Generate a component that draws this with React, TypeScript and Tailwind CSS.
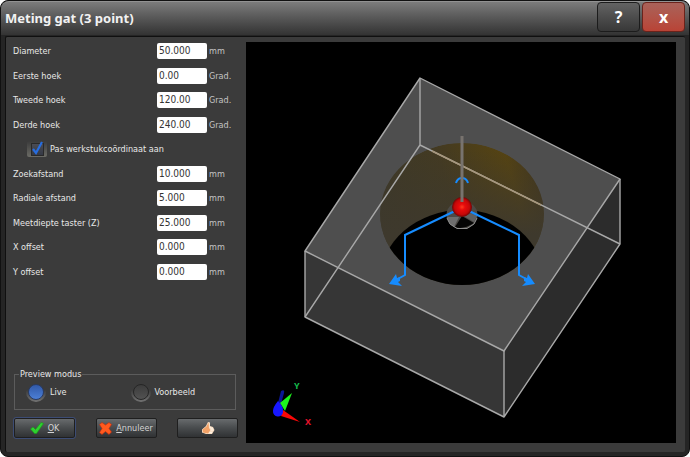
import { useState } from "react";

interface Field {
  id: string;
  label: string;
  value: string;
  unit: string;
}

const hoekFields: Field[] = [
  { id: "diameter", label: "Diameter", value: "50.000", unit: "mm" },
  { id: "hoek1", label: "Eerste hoek", value: "0.00", unit: "Grad." },
  { id: "hoek2", label: "Tweede hoek", value: "120.00", unit: "Grad." },
  { id: "hoek3", label: "Derde hoek", value: "240.00", unit: "Grad." },
];

const afstandFields: Field[] = [
  { id: "zoek", label: "Zoekafstand", value: "10.000", unit: "mm" },
  { id: "radiaal", label: "Radiale afstand", value: "5.000", unit: "mm" },
  { id: "diepte", label: "Meetdiepte taster (Z)", value: "25.000", unit: "mm" },
  { id: "xoffset", label: "X offset", value: "0.000", unit: "mm" },
  { id: "yoffset", label: "Y offset", value: "0.000", unit: "mm" },
];

function FieldRow({ field }: { field: Field }) {
  return (
    <div className="flex items-center">
      <label htmlFor={field.id} className="w-36 shrink-0">
        {field.label}
      </label>
      <input
        id={field.id}
        defaultValue={field.value}
        className="h-4 w-[50px] rounded-xs bg-white pl-0.5 text-[10px] leading-4 text-[#333333] outline-none"
      />
      <span className="pl-0.5 text-[#c4c4c4]">{field.unit}</span>
    </div>
  );
}

function ModeRadio({ label, checked, onChange }: { label: string; checked: boolean; onChange: () => void }) {
  return (
    <label className="flex flex-1 items-center gap-1">
      <span className="flex size-5 items-center justify-center rounded-full bg-linear-to-b from-[#3b3b3b] from-40% to-[#747474]">
        <input
          type="radio"
          name="modus"
          checked={checked}
          onChange={onChange}
          className="size-4 appearance-none rounded-full border border-[#262626] bg-linear-to-b from-[#3c3c3c] to-[#525252] checked:border-[#283a63] checked:from-[#3159a8] checked:to-[#4c7fd6]"
        />
      </span>
      {label}
    </label>
  );
}

const buttonClass =
  "flex h-5 w-[61px] items-center justify-center gap-1 rounded-xs border border-[#1f1f1f] bg-linear-to-b from-[#686b6d] via-[#4b4e50] via-45% to-[#303234] text-[#d4d4d4]";

function CheckIcon() {
  return (
    <svg viewBox="0 0 14 12" className="h-3 w-3.5" aria-hidden="true">
      <path d="M.5 7 3 5 5.5 7.500 11 .5 13.5 1.5 6.500 11.5H4.5Z" fill="#2fd02f" stroke="#18a018" strokeWidth=".6" />
    </svg>
  );
}

function CrossIcon() {
  return (
    <svg viewBox="0 0 13 13" className="size-[13px]" aria-hidden="true">
      <path d="M.5 2.500 3 .5l3.500 2.500L10 .5l2.500 2-2.500 4L12.500 10 10 12.5 6.5 9.500 3 12.5.5 10.5 3 6.5Z" fill="#ff5a1e" stroke="#c22a0d" strokeWidth=".6" />
    </svg>
  );
}

function HandIcon() {
  return (
    <svg viewBox="0 0 14 14" className="size-3.5" aria-hidden="true">
      <path d="M1 8.5 5 5 7 1 9 1.5 9 5 12 6 13.500 9 11 13 5 13 1 11.5Z" fill="#f9dfc6" />
      <path d="M1.500 8.500 5.500 5.500 7.500 1.500 8 7 9.500 9 7 12.500 2 11.5Z" fill="#f2a268" />
      <path d="M9 6.5 12 8M9.5 9H12M8.5 11.5H11" stroke="#fff4e5" strokeWidth="1" />
    </svg>
  );
}

function Preview() {
  return (
    <svg viewBox="246 42 430 401" className="h-full w-full" role="img" aria-label="Preview">
      <defs>
        <linearGradient id="wand" x1="380" y1="215" x2="535" y2="170" gradientUnits="userSpaceOnUse">
          <stop offset="0" stopColor="#3c3828" />
          <stop offset=".45" stopColor="#433a22" />
          <stop offset=".85" stopColor="#554312" />
          <stop offset="1" stopColor="#44371a" />
        </linearGradient>
        <linearGradient id="schaduw" x1="0" y1="150" x2="0" y2="235" gradientUnits="userSpaceOnUse">
          <stop offset="0" stopColor="#3e392d" stopOpacity="0" />
          <stop offset="1" stopColor="#3e392d" />
        </linearGradient>
        <radialGradient id="kogel" cx=".5" cy=".5" r=".5">
          <stop offset="0" stopColor="#ff3a20" />
          <stop offset=".3" stopColor="#e80b0b" />
          <stop offset=".75" stopColor="#c50808" />
          <stop offset="1" stopColor="#6d0404" />
        </radialGradient>
        <clipPath id="gat">
          <ellipse cx="462" cy="214" rx="82" ry="71" />
        </clipPath>
      </defs>

      {/* blok */}
      <path d="M420 78 620 179 504 351 305 251Z" fill="#4e4e4e" />
      <path d="M305 251 504 351V417L305 317Z" fill="#363636" />
      <path d="M620 179V244L504 417V351Z" fill="#2c2c2c" />

      {/* gat met wand, onderrand als tweede ellips */}
      <g clipPath="url(#gat)">
        <ellipse cx="462" cy="214" rx="82" ry="71" fill="url(#wand)" />
        <path d="M380 143H544V285H380Z" fill="url(#schaduw)" />
        <ellipse cx="462" cy="281" rx="82" ry="71" fill="#000" />
      </g>

      {/* ribben */}
      <g fill="none" stroke="#a8a8a8" strokeWidth="1.4" strokeLinejoin="round">
        <path d="M420 78 620 179 504 351 305 251Z" />
        <path d="M305 251V317L504 417V351M504 417 620 244V179" />
        <path d="M420 78V145M305 317 420 145 620 244" />
      </g>
      <path d="m432 151 109 54" stroke="#a7977c" strokeWidth="1.4" />

      {/* taster */}
      <ellipse cx="462" cy="215" rx="15.500" ry="14" fill="#4c4a46" />
      <path d="m462 216-7 11Q463 230 474 223Z" fill="#050505" />
      <path d="m447 217 12 0-5 10Q449 224 447 217Z" fill="#6e6e6e" />
      <path d="m470 213 7 3-3 6-10-6Z" fill="#606060" />
      <path d="M447 218 450 224 457 228.500H467L474 224 477 218" fill="none" stroke="#8f8f8f" />

      {/* meetbanen */}
      <g fill="none" stroke="#168cff" strokeWidth="2">
        <path d="M456 183Q457 179 461 178M463 178Q467 179 468 183" />
        <path d="M455 211 405 235V275L396 280" />
        <path d="M469 211 519 235V275L528 280" />
      </g>
      <path d="m389 284 7-10 1 4 3-1v4l-2 1 4 4Z" fill="#168cff" />
      <path d="m535 284-7-10-1 4-3-1v4l2 1-4 4Z" fill="#168cff" />

      <circle cx="462" cy="207" r="10" fill="url(#kogel)" />
      <path d="M462 136V202" stroke="#78736e" strokeWidth="3" />

      {/* assenkruis */}
      <path d="M278 403 281 391Q285 389 284 393L281 404Z" fill="#0b1595" />
      <path d="m280 403 12-10-7 18Z" fill="#1df51d" />
      <path d="m283 410 17 12-19-6Z" fill="#fb0707" />
      <path d="M278 401Q284 407 283 412A5 5 0 0 1 273 411Q273 407 278 401Z" fill="#1717ff" />
      <text x="294" y="389" fill="#14b94c" fontSize="9" fontWeight="700" fontFamily="Noto Sans, sans-serif">Y</text>
      <text x="305" y="425" fill="#e5132b" fontSize="9" fontWeight="700" fontFamily="Noto Sans, sans-serif">X</text>
    </svg>
  );
}

export default function App() {
  const [modus, setModus] = useState("live");

  return (
    <div className="bg-white font-['DejaVu_Sans_Condensed','Noto_Sans',sans-serif] text-[9px] leading-4 text-[#e8e8e8]">
      <div className="flex min-h-screen flex-col rounded-lg border border-[#111111] bg-[#252525] px-1 pb-1">
        <header className="-mx-1 flex h-[34px] items-start justify-between rounded-t-lg border-t border-[#929292] bg-linear-to-b from-[#7c7c7c] to-[#333333] pr-1 pl-1">
          <h1 className="font-['Noto_Sans',sans-serif] text-[13px] leading-8 font-bold text-[#f2f2f2]">
            Meting gat (3 point)
          </h1>
          <div className="flex gap-0.5 font-['Noto_Sans',sans-serif] text-[16px] font-bold text-white">
            <button
              type="button"
              aria-label="Help"
              className="h-[30px] w-[43px] rounded-sm border border-[#1c1c1c] bg-linear-to-b from-[#636363] to-[#383838]"
            >
              ?
            </button>
            <button
              type="button"
              aria-label="Sluiten"
              className="h-[30px] w-[43px] rounded-sm border border-[#6b231b] bg-linear-to-b from-[#a96259] to-[#b94336]"
            >
              x
            </button>
          </div>
        </header>

        <main className="mt-px flex flex-1 rounded-xs border-t border-l border-[#101010] bg-[#3b3b3b] pr-[9px] pb-[9px]">
          <form className="flex w-60 shrink-0 flex-col pl-[7px]" onSubmit={(e) => e.preventDefault()}>
            <div className="mt-0.5 grid h-[245px] auto-rows-fr">
              {hoekFields.map((f) => (
                <FieldRow key={f.id} field={f} />
              ))}
              <label className="ml-3.5 flex items-center gap-[3px]">
                <span className="relative flex h-4 w-5 items-center justify-center rounded-xs bg-linear-to-b from-[#3b3b3b] to-[#6c6c66]">
                  <input
                    type="checkbox"
                    defaultChecked
                    className="peer size-[13px] appearance-none border border-[#292929] bg-linear-to-b from-[#4a4c54] to-[#353945]"
                  />
                  <svg
                    viewBox="0 0 16 16"
                    className="pointer-events-none absolute inset-x-0.5 inset-y-0 hidden size-4 peer-checked:block"
                    aria-hidden="true"
                  >
                    <path d="m4 8 3 4 6-11" fill="none" stroke="#276de0" strokeWidth="2.200" />
                  </svg>
                </span>
                Pas werkstukcoördinaat aan
              </label>
              {afstandFields.map((f) => (
                <FieldRow key={f.id} field={f} />
              ))}
            </div>

            <fieldset className="mt-auto mr-2.5 ml-px h-11 border border-[#5c5c5c] pl-2">
              <legend className="-ml-1 px-px leading-4">Preview modus</legend>
              <div className="flex items-center pl-[3px]">
                <ModeRadio label="Live" checked={modus === "live"} onChange={() => setModus("live")} />
                <ModeRadio label="Voorbeeld" checked={modus === "voorbeeld"} onChange={() => setModus("voorbeeld")} />
              </div>
            </fieldset>

            <div className="mt-2 mr-2 mb-[5px] ml-px flex justify-between">
              <button type="submit" className={`${buttonClass} outline outline-[#3c4c74]`}>
                <CheckIcon />
                <span>
                  <u>O</u>K
                </span>
              </button>
              <button type="button" className={buttonClass}>
                <CrossIcon />
                <span>
                  <u>A</u>nnuleer
                </span>
              </button>
              <button type="button" aria-label="Goed" className={buttonClass}>
                <HandIcon />
              </button>
            </div>
          </form>

          <section className="mt-[5px] min-w-0 flex-1 bg-black">
            <Preview />
          </section>
        </main>
      </div>
    </div>
  );
}
